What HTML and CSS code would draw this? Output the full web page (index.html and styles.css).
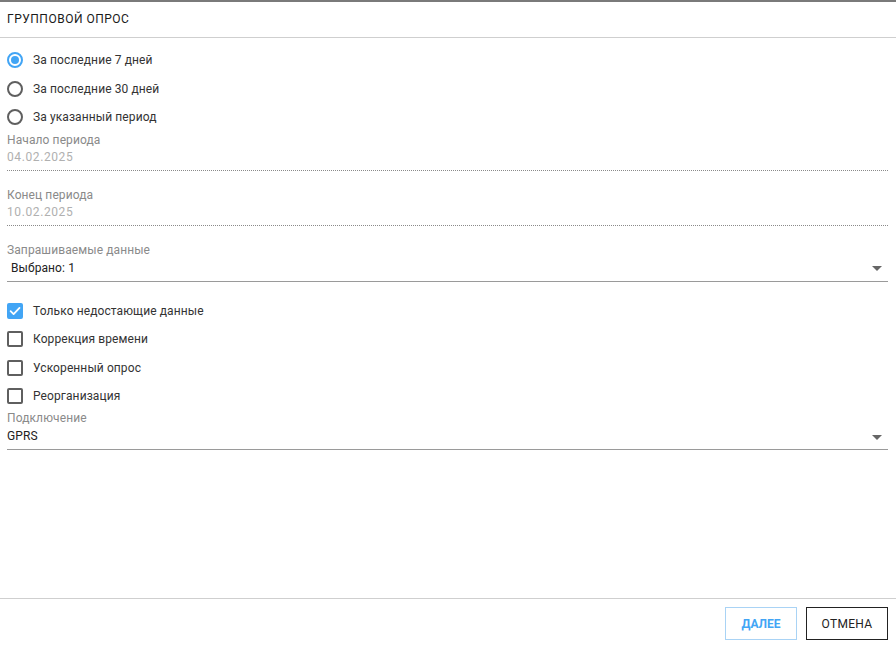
FILE: index.html
```html
<!DOCTYPE html>
<html lang="ru">
<head>
<meta charset="utf-8">
<title>Групповой опрос</title>
<link rel="stylesheet" href="styles.css">
</head>
<body>
<div class="dialog">
  <div class="header">ГРУППОВОЙ ОПРОС</div>
  <div class="content">
    <div class="group radios">
      <label class="row"><span class="radio checked"></span><span class="text">За последние 7 дней</span></label>
      <label class="row"><span class="radio"></span><span class="text">За последние 30 дней</span></label>
      <label class="row"><span class="radio"></span><span class="text">За указанный период</span></label>
    </div>
    <div class="field disabled">
      <div class="flabel">Начало периода</div>
      <div class="fvalue">04.02.2025</div>
    </div>
    <div class="field disabled">
      <div class="flabel">Конец периода</div>
      <div class="fvalue">10.02.2025</div>
    </div>
    <div class="field select">
      <div class="flabel">Запрашиваемые данные</div>
      <div class="fvalue indent">Выбрано: 1<span class="arrow"></span></div>
    </div>
    <div class="group checks">
      <label class="row"><span class="check checked"><svg viewBox="0 0 16 16" width="16" height="16"><path d="M3.6 8.2 L6.6 11.1 L12.5 4.9" fill="none" stroke="#fff" stroke-width="1.8" stroke-linecap="round" stroke-linejoin="round"/></svg></span><span class="text">Только недостающие данные</span></label>
      <label class="row"><span class="check"></span><span class="text">Коррекция времени</span></label>
      <label class="row"><span class="check"></span><span class="text">Ускоренный опрос</span></label>
      <label class="row"><span class="check"></span><span class="text">Реорганизация</span></label>
    </div>
    <div class="field select conn">
      <div class="flabel">Подключение</div>
      <div class="fvalue">GPRS<span class="arrow"></span></div>
    </div>
  </div>
  <div class="footer">
    <button class="btn primary">ДАЛЕЕ</button>
    <button class="btn secondary">ОТМЕНА</button>
  </div>
</div>
</body>
</html>
```

FILE: styles.css
```css
* { box-sizing: border-box; }
html, body { margin: 0; padding: 0; background: #fff; }
body {
  font-family: Roboto, "Liberation Sans", Arial, sans-serif;
  font-size: 12px;
  color: #333;
  letter-spacing: 0.1px;
}
.dialog {
  width: 896px;
  height: 645px;
  display: flex;
  flex-direction: column;
  border-top: 2px solid #7a7a7a;
}
.header {
  height: 36px;
  line-height: 34px;
  padding-left: 7px;
  font-weight: 400;
  color: #1a1a1a;
  letter-spacing: 0.5px;
  border-bottom: 1px solid #cfcfcf;
}
.content {
  flex: 1;
  padding: 0 8px 0 7px;
}
.group.radios { margin-top: 7.75px; }
.row {
  display: flex;
  align-items: center;
  height: 28.5px;
}
.text { margin-left: 10px; color: #333; }
.radio {
  width: 16px;
  height: 16px;
  border: 2px solid #5f5f5f;
  border-radius: 50%;
  display: flex;
  align-items: center;
  justify-content: center;
}
.radio.checked { border-color: #42a5f5; }
.radio.checked::after {
  content: "";
  width: 8px;
  height: 8px;
  border-radius: 50%;
  background: #42a5f5;
}
.field { margin-top: 2px; }
.flabel { line-height: 14px; color: #8a8a8a; }
.fvalue {
  position: relative;
  line-height: 16px;
  margin-top: 2px;
  padding-bottom: 5px;
}
.field + .field { margin-top: 17px; }
.field.disabled .fvalue {
  color: #b0b0b0;
  border-bottom: 1px dotted #8a8a8a;
  letter-spacing: 0.6px;
}
.field.select .fvalue {
  color: #222;
  border-bottom: 1px solid #9a9a9a;
  margin-top: 3px;
  padding-bottom: 5px;
}
.fvalue.indent { padding-left: 4px; }
.arrow {
  position: absolute;
  right: 6px;
  top: 6px;
  width: 0;
  height: 0;
  border-left: 5px solid transparent;
  border-right: 5px solid transparent;
  border-top: 5px solid #666;
}
.group.checks { margin-top: 14px; }
.check {
  width: 16px;
  height: 16px;
  border: 2px solid #5f5f5f;
  border-radius: 2px;
  display: flex;
  align-items: center;
  justify-content: center;
}
.check.checked {
  background: #42a5f5;
  border-color: #42a5f5;
}
.check svg { flex: none; }
.field.conn { margin-top: 1px; }
.field.conn .fvalue { margin-top: 3px; padding-bottom: 5px; }
.field.conn .arrow { top: 7px; }
.footer {
  height: 47px;
  border-top: 1px solid #cfcfcf;
  display: flex;
  justify-content: flex-end;
  align-items: flex-start;
  gap: 9px;
  padding: 8px 8px 0 0;
}
.btn {
  height: 33px;
  font-family: Roboto, "Liberation Sans", Arial, sans-serif;
  font-size: 12px;
  background: #fff;
  padding: 0;
  cursor: pointer;
}
.btn.primary {
  width: 72px;
  color: #42a5f5;
  font-weight: 700;
  border: 1px solid #a9d3f5;
}
.btn.secondary {
  width: 82px;
  color: #222;
  font-weight: 400;
  letter-spacing: 0.3px;
  border: 1px solid #222;
}
```
